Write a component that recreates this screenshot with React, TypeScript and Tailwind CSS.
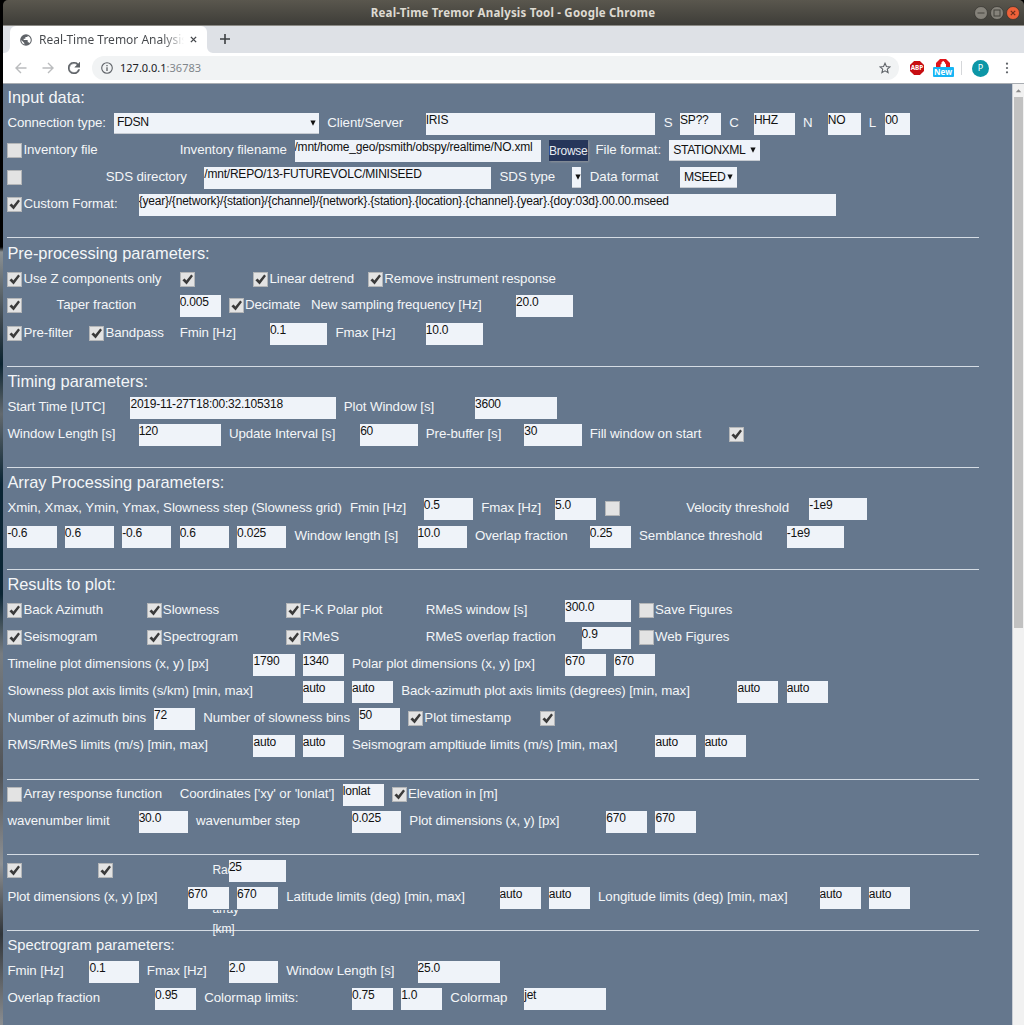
import React from 'react';

type P = { c: string; t?: string };

const Label = ({ c, t }: P) => (
  <div className={`whitespace-nowrap leading-[20px] text-[13.3px] tracking-[-0.08px] text-[#f4f6f8] ${c}`}>{t}</div>
);

const Field = ({ c, t }: P) => (
  <div className={`z-10 h-[22px] overflow-hidden whitespace-nowrap bg-[#eff3f9] text-[12px] tracking-[-0.21px] leading-[14px] text-[#111] ${c}`}>{t}</div>
);

const Check = ({ c, t, off }: P & { off?: boolean }) => (
  <div className={`flex h-[22px] whitespace-nowrap ${c}`}>
    <svg viewBox="0 0 15 15" className="mt-[3px] h-[15px] w-[15px] shrink-0">
      <rect x="0.5" y="0.5" width="14" height="14" fill="#e3e3e3" stroke="#b4b6b8" />
      {!off && <path d="M2.400 8.300L4.600 6.500L6.400 8.600L11.200 2.400L13 4L6.600 12.600Z" fill="#3a3a3a" />}
    </svg>
    <span className="ml-[1px] text-[13.3px] tracking-[-0.08px] leading-[20px] text-[#f4f6f8]">{t}</span>
  </div>
);

const Select = ({ c, t }: P) => (
  <div className={`flex h-[21px] items-center justify-between overflow-hidden whitespace-nowrap border-b border-[#c6cbd2] bg-[#eff3f9] text-[12.2px] tracking-[-0.4px] text-[#111] ${c}`}>
    <span className="pb-px">{t}</span>
    <svg viewBox="0 0 6 6" className="h-[6px] w-[6px] shrink-0"><path d="M0.4 0.5H5.6L3 5.8Z" fill="#111" /></svg>
  </div>
);

const Row = ({ children, shift }: { children: React.ReactNode; shift?: string }) => (
  <div className={`grid h-[27.19px] grid-cols-[repeat(118,8.204px)] grid-rows-[27.19px] items-start ${shift ?? ''}`}>{children}</div>
);

const Section = ({ title, first, small, children }: { title?: string; first?: boolean; small?: boolean; children: React.ReactNode }) => (
  <section className="pb-[15.85px]">
    {!first && <div className="-mb-px h-px w-[972px] bg-[#d5dce4]" />}
    {title ? (
      <h2 className={`leading-[22px] text-[#f4f6f8] ${first ? 'h-[29px] pt-[2px]' : 'h-[31px] pt-[4.5px]'} ${small ? 'text-[14.76px]' : 'text-[16.4px]'}`}>{title}</h2>
    ) : (
      <div className="h-[5.4px]" />
    )}
    {children}
  </section>
);

export default function App() {
  return (
    <div className="flex h-[1025px] w-[1024px] flex-col overflow-hidden bg-black font-['Liberation_Sans',Arial,sans-serif]">
      <header className="ml-[3px] flex h-[26px] shrink-0 items-center rounded-t-[5px] border-b border-[#8b8a85] bg-gradient-to-b from-[#5a574e] to-[#3e3d38] pr-[4px]">
        <div className="w-[48px]" />
        <div className="flex-1 pl-[3px] text-center font-['Noto_Sans',sans-serif] text-[11.5px] font-bold tracking-[0.2px] text-[#dedad2]">Real-Time Tremor Analysis Tool - Google Chrome</div>
        <div className="flex w-[48px] justify-end gap-[2px]">
          <svg viewBox="0 0 14 14" className="h-[14px] w-[14px]"><circle cx="7" cy="7" r="6.5" fill="#85827a" stroke="#35342f" strokeWidth=".7" /><path d="M3.5 7H10.5" stroke="#45433d" /></svg>
          <svg viewBox="0 0 14 14" className="h-[14px] w-[14px]"><circle cx="7" cy="7" r="6.5" fill="#85827a" stroke="#35342f" strokeWidth=".7" /><rect x="4" y="4" width="6" height="6" fill="none" stroke="#45433d" /></svg>
          <svg viewBox="0 0 14 14" className="h-[14px] w-[14px]"><circle cx="7" cy="7" r="6.5" fill="#ee6139" stroke="#35342f" strokeWidth=".7" /><path d="M4.8 4.8L9.2 9.2M9.2 4.8L4.8 9.2" stroke="#6b2f1c" strokeWidth="1.2" /></svg>
        </div>
      </header>
      <div className="ml-[3px] flex h-[27px] shrink-0 bg-[#dee1e6] pl-px font-['Noto_Sans',sans-serif]">
        <svg viewBox="0 0 6 6" className="h-[6px] w-[6px] self-end"><path d="M6 0V6H0A6 6 0 0 0 6 0Z" fill="#fff" /></svg>
        <div className="flex h-[27px] w-[197px] items-center rounded-t-[6px] bg-white pl-[9px]">
          <svg viewBox="0 0 24 24" className="h-[14px] w-[14px]"><path fill="#5f6368" d="M12 2a10 10 0 1 0 0 20 10 10 0 0 0 0-20zM4 12l5 5v1c0 1 1 2 2 2A8 8 0 0 1 4 12zm14 5.400c-.3-.8-1-1.400-2-1.400h-1v-3c0-.5-.5-1-1-1H8v-2h2c.6 0 1-.4 1-1V7h2c1 0 2-1 2-2v-.4a8 8 0 0 1 3 12.800z" /></svg>
          <div className="ml-[6px] w-[145px] overflow-hidden bg-gradient-to-r from-[#45484c] from-85% to-white bg-clip-text text-[12px] whitespace-nowrap text-transparent">Real-Time Tremor Analysis</div>
          <svg viewBox="0 0 8 8" className="ml-[6px] h-[7px] w-[7px]"><path d="M1 1L7 7M7 1L1 7" stroke="#45484c" strokeWidth="1.6" /></svg>
        </div>
        <svg viewBox="0 0 6 6" className="h-[6px] w-[6px] self-end"><path d="M0 0V6H6A6 6 0 0 1 0 0Z" fill="#fff" /></svg>
        <svg viewBox="0 0 10 10" className="mt-[8px] ml-[7px] h-[10px] w-[10px]"><path d="M5 0V10M0 5H10" stroke="#3c4043" strokeWidth="1.6" /></svg>
      </div>
      <div className="ml-[3px] flex h-[31px] shrink-0 items-center border-b border-[#a9adb2] bg-white font-['Noto_Sans',sans-serif]">
        <svg viewBox="0 0 12 12" className="ml-[12px] h-[12px] w-[12px]" fill="none" stroke="#babcbe" strokeWidth="1.4"><path d="M11.500 6H1.500M6 1L1 6L6 11" /></svg>
        <svg viewBox="0 0 12 12" className="ml-[15px] h-[12px] w-[12px]" fill="none" stroke="#babcbe" strokeWidth="1.4"><path d="M.5 6H10.500M6 1L11 6L6 11" /></svg>
        <svg viewBox="4 4 16 16" className="ml-[14px] h-[12px] w-[12px]"><path fill="#5f6368" stroke="#5f6368" strokeWidth=".6" d="M17.650 6.350A8 8 0 1 0 19.730 14h-2.080A6 6 0 1 1 12 6c1.660 0 3.140.690 4.220 1.780L13 11h7V4z" /></svg>
        <div className="ml-[12px] flex h-[24px] w-[807px] items-center rounded-full bg-[#f1f3f4] pr-[8px] pl-[9px] text-[11px]">
          <svg viewBox="0 0 12 12" className="h-[12px] w-[12px]"><circle cx="6" cy="6" r="5.300" fill="none" stroke="#5f6368" strokeWidth="1.100" /><path d="M6 5.200V9M6 3V4.300" stroke="#5f6368" strokeWidth="1.300" /></svg>
          <span className="ml-[7px] text-[#202124]">127.0.0.1</span><span className="flex-1 text-[#80868b]">:36783</span>
          <svg viewBox="0 0 24 24" className="h-[12px] w-[12px]" fill="none" stroke="#5f6368" strokeWidth="2.200"><path d="M12 2.500L14.900 9L22 9.700L16.600 14.400L18.200 21.300L12 17.700L5.800 21.300L7.400 14.400L2 9.700L9.100 9Z" /></svg>
        </div>
        <svg viewBox="0 0 14 14" className="ml-[11px] h-[14px] w-[14px]"><path d="M4.100 0H9.900L14 4.100V9.900L9.900 14H4.100L0 9.900V4.100Z" fill="#c70d12" /><text x="7" y="9.300" textAnchor="middle" fontSize="6.400" fontWeight="700" fill="#fff" textLength="12.500" lengthAdjust="spacingAndGlyphs">ABP</text></svg>
        <div className="ml-[8px] flex h-[18px] w-[22px] flex-col items-center">
          <svg viewBox="0 0 14 8" className="h-[8px] w-[14px] shrink-0"><path d="M0 8V4L4 0H10L14 4V8Z" fill="#e0151b" /><path d="M4.500 8V5.500L5.500 5V3.200L6.500 3V2H7.800V3L9 3.200V5L10 4.500V8Z" fill="#fff" /></svg>
          <div className="h-[10px] w-[21px] rounded-[1px] bg-[#17b5f5] text-center text-[8px] leading-[10px] font-bold text-white">New</div>
        </div>
        <div className="ml-[7px] h-[14px] w-px bg-[#d5d7da]" />
        <div className="ml-[10px] flex h-[17px] w-[17px] items-center justify-center rounded-full bg-[#0c96a6] text-[9px] text-white">P</div>
        <svg viewBox="0 0 4 14" className="ml-[16px] h-[12px] w-[4px]" fill="#5f6368"><circle cx="2" cy="2" r="1.300" /><circle cx="2" cy="7" r="1.300" /><circle cx="2" cy="12" r="1.300" /></svg>
      </div>
      <div className="flex min-h-0 flex-1">
        <div className="w-[3px] shrink-0 bg-[linear-gradient(to_bottom,#000_0,#000_163px,#8b9194_168px,#39444b_240px,#0b2431_280px,#62696e_330px,#0a2534_400px,#0a2534_510px,#777c80_570px,#505357_690px,#8e9194_780px,#30353a_850px,#8b8e91_941px)]" />
        <main className="min-w-0 flex-1 overflow-hidden bg-[#65778d] pl-[4.400px]">
          <Section first title="Input data:">
            <Row>
              <Label c="col-[1/13]" t="Connection type:" />
              <Select c="col-[14/39] pl-[3px] pr-[3px]" t="FDSN" />
              <Label c="col-[40/51]" t="Client/Server" />
              <Field c="col-[52/80]" t="IRIS" />
              <Label c="col-[81/82]" t="S" />
              <Field c="col-[83/88]" t="SP??" />
              <Label c="col-[89/90]" t="C" />
              <Field c="col-[92/97]" t="HHZ" />
              <Label c="col-[98/99]" t="N" />
              <Field c="col-[101/105]" t="NO" />
              <Label c="col-[106/107]" t="L" />
              <Field c="col-[108/111]" t="00" />
            </Row>
            <Row>
              <Check off c="col-[1/20]" t="Inventory file" />
              <Label c="col-[22/35]" t="Inventory filename" />
              <Field c="col-[36/66]" t="/mnt/home_geo/psmith/obspy/realtime/NO.xml" />
              <div className="col-[67/72] h-[21px] w-[39px] bg-[#26365a] text-center text-[12px] leading-[22px] tracking-[-0.250px] whitespace-nowrap text-[#e8ecf2] shadow-[1px_1px_2px_#8d9299]">Browse</div>
              <Label c="col-[73/81] -ml-[2.500px]" t="File format:" />
              <Select c="col-[82/93] -ml-[2.500px] w-[91px] pl-[4px] pr-[4px]" t="STATIONXML" />
            </Row>
            <Row>
              <Check off c="col-[1/5]" />
              <Label c="col-[13/24]" t="SDS directory" />
              <Field c="col-[25/60]" t="/mnt/REPO/13-FUTUREVOLC/MINISEED" />
              <Label c="col-[61/69]" t="SDS type" />
              <Select c="col-[70/71] -ml-px mr-px" />
              <Label c="col-[72/82]" t="Data format" />
              <Select c="col-[83/90] pl-[4px] pr-[4px]" t="MSEED" />
            </Row>
            <Row shift="-mt-[0.300px]">
              <Check c="col-[1/16]" t="Custom Format:" />
              <Field c="col-[17/102]" t="{year}/{network}/{station}/{channel}/{network}.{station}.{location}.{channel}.{year}.{doy:03d}.00.00.mseed" />
            </Row>
          </Section>
          <Section title="Pre-processing parameters:">
            <Row shift="pt-[0.500px]">
              <Check c="col-[1/20]" t="Use Z components only" />
              <Check c="col-[22/24]" />
              <Check c="col-[31/44]" t="Linear detrend" />
              <Check c="col-[45/70]" t="Remove instrument response" />
            </Row>
            <Row>
              <Check c="col-[1/4]" />
              <Label c="col-[7/21]" t="Taper fraction" />
              <Field c="col-[22/27]" t="0.005" />
              <Check c="col-[28/37]" t="Decimate" />
              <Label c="col-[38/62]" t="New sampling frequency [Hz]" />
              <Field c="col-[63/70]" t="20.0" />
            </Row>
            <Row>
              <Check c="col-[1/10]" t="Pre-filter" />
              <Check c="col-[11/21]" t="Bandpass" />
              <Label c="col-[22/32]" t="Fmin [Hz]" />
              <Field c="col-[33/40]" t="0.1" />
              <Label c="col-[41/51]" t="Fmax [Hz]" />
              <Field c="col-[52/59]" t="10.0" />
            </Row>
          </Section>
          <Section title="Timing parameters:">
            <Row>
              <Label c="col-[1/15]" t="Start Time [UTC]" />
              <Field c="col-[16/41]" t="2019-11-27T18:00:32.105318" />
              <Label c="col-[42/57]" t="Plot Window [s]" />
              <Field c="col-[58/68]" t="3600" />
            </Row>
            <Row>
              <Label c="col-[1/16]" t="Window Length [s]" />
              <Field c="col-[17/27]" t="120" />
              <Label c="col-[28/43]" t="Update Interval [s]" />
              <Field c="col-[44/51]" t="60" />
              <Label c="col-[52/63]" t="Pre-buffer [s]" />
              <Field c="col-[64/71]" t="30" />
              <Label c="col-[72/88]" t="Fill window on start" />
              <Check c="col-[89/91]" />
            </Row>
          </Section>
          <Section title="Array Processing parameters:">
            <Row shift="-ml-[2px] mt-[0.400px]">
              <Label c="col-[1/42] ml-[2px]" t="Xmin, Xmax, Ymin, Ymax, Slowness step (Slowness grid)" />
              <Label c="col-[43/51]" t="Fmin [Hz]" />
              <Field c="col-[52/58]" t="0.5" />
              <Label c="col-[59/67]" t="Fmax [Hz]" />
              <Field c="col-[68/73]" t="5.0" />
              <Check off c="col-[74/76] ml-px" />
              <Label c="col-[84/98]" t="Velocity threshold" />
              <Field c="col-[99/106]" t="-1e9" />
            </Row>
            <Row>
              <Field c="col-[1/7]" t="-0.6" />
              <Field c="col-[8/14]" t="0.6" />
              <Field c="col-[15/21]" t="-0.6" />
              <Field c="col-[22/28]" t="0.6" />
              <Field c="col-[29/35]" t="0.025" />
              <Label c="col-[36/50]" t="Window length [s]" />
              <Field c="col-[51/57]" t="10.0" />
              <Label c="col-[58/71]" t="Overlap fraction" />
              <Field c="col-[72/77]" t="0.25" />
              <Label c="col-[78/95]" t="Semblance threshold" />
              <Field c="col-[96/103]" t="-1e9" />
            </Row>
          </Section>
          <Section title="Results to plot:">
            <Row>
              <Check c="col-[1/17]" t="Back Azimuth" />
              <Check c="col-[18/34]" t="Slowness" />
              <Check c="col-[35/50]" t="F-K Polar plot" />
              <Label c="col-[52/68]" t="RMeS window [s]" />
              <Field c="col-[69/77]" t="300.0" />
              <Check off c="col-[78/95]" t="Save Figures" />
            </Row>
            <Row>
              <Check c="col-[1/17]" t="Seismogram" />
              <Check c="col-[18/34]" t="Spectrogram" />
              <Check c="col-[35/50]" t="RMeS" />
              <Label c="col-[52/70]" t="RMeS overlap fraction" />
              <Field c="col-[71/77]" t="0.9" />
              <Check off c="col-[78/95]" t="Web Figures" />
            </Row>
            <Row>
              <Label c="col-[1/30]" t="Timeline plot dimensions (x, y) [px]" />
              <Field c="col-[31/36]" t="1790" />
              <Field c="col-[37/42]" t="1340" />
              <Label c="col-[43/68]" t="Polar plot dimensions (x, y) [px]" />
              <Field c="col-[69/74]" t="670" />
              <Field c="col-[75/80]" t="670" />
            </Row>
            <Row>
              <Label c="col-[1/36]" t="Slowness plot axis limits (s/km) [min, max]" />
              <Field c="col-[37/42]" t="auto" />
              <Field c="col-[43/48]" t="auto" />
              <Label c="col-[49/89]" t="Back-azimuth plot axis limits (degrees) [min, max]" />
              <Field c="col-[90/95]" t="auto" />
              <Field c="col-[96/101]" t="auto" />
            </Row>
            <Row shift="-ml-px">
              <Label c="col-[1/18] ml-px" t="Number of azimuth bins" />
              <Field c="col-[19/24]" t="72" />
              <Label c="col-[25/43]" t="Number of slowness bins" />
              <Field c="col-[44/49]" t="50" />
              <Check c="col-[50/65]" t="Plot timestamp" />
              <Check c="col-[66/68]" />
            </Row>
            <Row>
              <Label c="col-[1/30]" t="RMS/RMeS limits (m/s) [min, max]" />
              <Field c="col-[31/36]" t="auto" />
              <Field c="col-[37/42]" t="auto" />
              <Label c="col-[43/79]" t="Seismogram ampltiude limits (m/s) [min, max]" />
              <Field c="col-[80/85]" t="auto" />
              <Field c="col-[86/91]" t="auto" />
            </Row>
          </Section>
          <Section>
            <Row>
              <Check off c="col-[1/21]" t="Array response function" />
              <Label c="col-[22/41]" t="Coordinates ['xy' or 'lonlat']" />
              <Field c="col-[42/47] -ml-px mr-px" t="lonlat" />
              <Check c="col-[48/65] -ml-px" t="Elevation in [m]" />
            </Row>
            <Row>
              <Label c="col-[1/16]" t="wavenumber limit" />
              <Field c="col-[17/23]" t="30.0" />
              <Label c="col-[24/42]" t="wavenumber step" />
              <Field c="col-[43/49]" t="0.025" />
              <Label c="col-[50/73]" t="Plot dimensions (x, y) [px]" />
              <Field c="col-[74/79]" t="670" />
              <Field c="col-[80/85]" t="670" />
            </Row>
          </Section>
          <Section>
            <Row>
              <Check c="col-[1/4]" />
              <Check c="col-[12/14]" />
              <div className="col-[26/28] pt-px text-[12px] leading-[19.700px] tracking-[-0.200px] text-[#f4f6f8]">Radius of array [km]</div>
              <Field c="col-[28/35]" t="25" />
            </Row>
            <div className="relative z-10 -mt-[4px] mb-[4.190px] h-[27px] bg-[#65778d] pt-[4px]">
              <Row>
                <Label c="col-[1/22]" t="Plot dimensions (x, y) [px]" />
                <Field c="col-[23/28]" t="670" />
                <Field c="col-[29/34]" t="670" />
                <Label c="col-[35/60]" t="Latitude limits (deg) [min, max]" />
                <Field c="col-[61/66]" t="auto" />
                <Field c="col-[67/72]" t="auto" />
                <Label c="col-[73/99]" t="Longitude limits (deg) [min, max]" />
                <Field c="col-[100/105]" t="auto" />
                <Field c="col-[106/111]" t="auto" />
              </Row>
            </div>
          </Section>
          <Section small title="Spectrogram parameters:">
            <Row>
              <Label c="col-[1/10]" t="Fmin [Hz]" />
              <Field c="col-[11/17]" t="0.1" />
              <Label c="col-[18/27]" t="Fmax [Hz]" />
              <Field c="col-[28/34]" t="2.0" />
              <Label c="col-[35/50]" t="Window Length [s]" />
              <Field c="col-[51/61]" t="25.0" />
            </Row>
            <Row>
              <Label c="col-[1/18]" t="Overlap fraction" />
              <Field c="col-[19/24]" t="0.95" />
              <Label c="col-[25/42]" t="Colormap limits:" />
              <Field c="col-[43/48]" t="0.75" />
              <Field c="col-[49/54]" t="1.0" />
              <Label c="col-[55/63]" t="Colormap" />
              <Field c="col-[64/74]" t="jet" />
            </Row>
          </Section>
        </main>
        <div className="flex w-[12px] shrink-0 flex-col items-center border-l border-[#c9ced5] bg-[#f1f1f1]">
          <svg viewBox="0 0 12 13" className="h-[13px] w-[11px]"><path d="M3 8.500H9L6 5Z" fill="#8a8a8a" /></svg>
          <div className="h-[531px] w-[9px] bg-[#c1c1c1]" />
        </div>
      </div>
    </div>
  );
}
